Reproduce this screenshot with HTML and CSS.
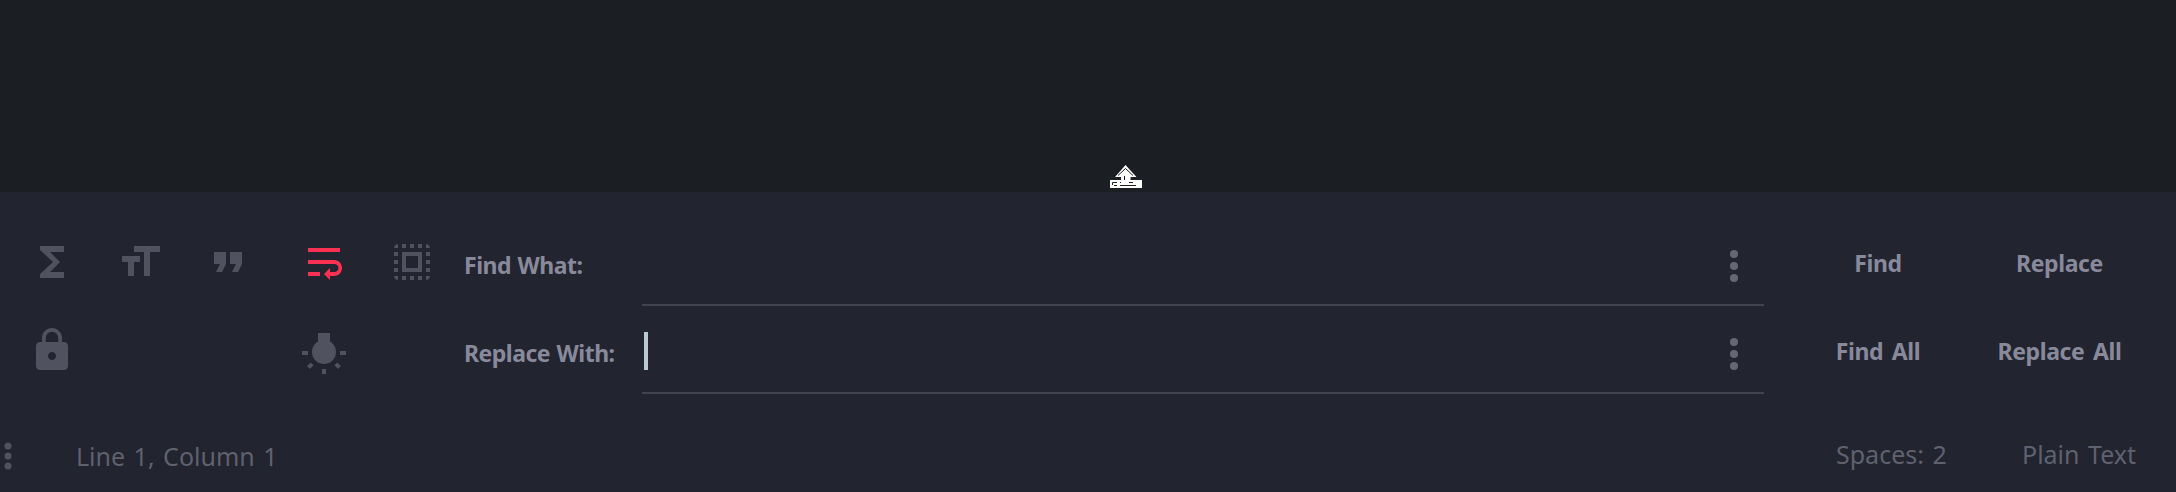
FILE: index.html
```html
<!DOCTYPE html>
<html lang="en">
<head>
<meta charset="utf-8">
<title>Find and Replace</title>
<link rel="stylesheet" href="styles.css">
</head>
<body>
<main class="editor"></main>
<section class="panel">
  <div class="tools">
    <svg class="icon" viewBox="0 0 24 24"><path d="M18 4H6v2l6.500 6L6 18v2h12v-3h-7l5-5-5-5h7z"/></svg>
    <svg class="icon" viewBox="0 0 24 24"><path d="M9 4v3h5v12h3V7h5V4H9zm-6 8h3v7h3v-7h3V9H3v3z"/></svg>
    <svg class="icon" viewBox="0 0 24 24"><path d="M6 17h3l2-4V7H5v6h3zm8 0h3l2-4V7h-6v6h3z"/></svg>
    <svg class="icon active" viewBox="0 0 24 24"><path d="M4 19h6v-2H4v2zM20 5H4v2h16V5zm-3 6H4v2h13.250c1.100 0 2 .9 2 2s-.9 2-2 2H15v-2l-3 3 3 3v-2h2c2.210 0 4-1.790 4-4s-1.790-4-4-4z"/></svg>
    <svg class="icon" viewBox="0 0 24 24"><path d="M3 5h2V3c-1.100 0-2 .9-2 2zm0 8h2v-2H3v2zm4 8h2v-2H7v2zM3 9h2V7H3v2zm10-6h-2v2h2V3zm6 0v2h2c0-1.100-.9-2-2-2zM5 21v-2H3c0 1.100.9 2 2 2zm-2-4h2v-2H3v2zM9 3H7v2h2V3zm2 18h2v-2h-2v2zm8-8h2v-2h-2v2zm0 8c1.100 0 2-.9 2-2h-2v2zm0-12h2V7h-2v2zm0 8h2v-2h-2v2zm-4 4h2v-2h-2v2zm0-16h2V3h-2v2zM7 17h10V7H7v10zm2-8h6v6H9V9z"/></svg>
    <svg class="icon lock" viewBox="0 0 24 24"><path d="M18 8h-1V6c0-2.760-2.240-5-5-5S7 3.240 7 6v2H6c-1.100 0-2 .9-2 2v10c0 1.100.9 2 2 2h12c1.100 0 2-.9 2-2V10c0-1.100-.9-2-2-2zm-6 9c-1.100 0-2-.9-2-2s.9-2 2-2 2 .9 2 2-.9 2-2 2zm3.100-9H8.900V6c0-1.710 1.390-3.100 3.100-3.100s3.100 1.390 3.100 3.100v2z"/></svg>
    <svg class="icon bulb" viewBox="0 0 24 24"><path d="M3.550 18.540l1.410 1.410 1.800-1.790-1.410-1.410-1.800 1.790zM11 22.450h2V20h-2v2.450zM4 11H1v2h3v-2zm11-4.690V2H9v4.310C7.210 7.350 6 9.280 6 11.500c0 3.310 2.690 6 6 6s6-2.690 6-6c0-2.220-1.210-4.150-3-5.190zm5 4.690v2h3v-2h-3zm-2.760 7.160l1.790 1.800 1.410-1.410-1.800-1.790-1.400 1.400z"/></svg>
  </div>
  <div class="fields">
    <label class="field"><span class="label">Find What:</span><span class="input"><svg class="dots" viewBox="0 0 8 32"><circle cx="4" cy="4" r="4"/><circle cx="4" cy="16" r="4"/><circle cx="4" cy="28" r="4"/></svg></span></label>
    <label class="field"><span class="label">Replace With:</span><span class="input"><i class="caret"></i><svg class="dots" viewBox="0 0 8 32"><circle cx="4" cy="4" r="4"/><circle cx="4" cy="16" r="4"/><circle cx="4" cy="28" r="4"/></svg></span></label>
  </div>
  <div class="actions">
    <span class="btn">Find</span><span class="btn">Replace</span>
    <span class="btn">Find All</span><span class="btn">Replace All</span>
  </div>
</section>
<footer class="status">
  <svg class="grip" viewBox="0 0 8 28"><circle cx="4" cy="4" r="3.500"/><circle cx="4" cy="14" r="3.500"/><circle cx="4" cy="24" r="3.500"/></svg>
  <span class="position">Line 1, Column 1</span>
  <span class="spaces">Spaces: 2</span>
  <span class="syntax">Plain Text</span>
</footer>
<svg class="cursor" viewBox="0 0 34 24"><path fill="#fff" d="M16.500 0l11 12h-6v3H33v8H1v-8h11v-3H6z"/><path fill="none" stroke="#1b1e22" d="M9 10.500l7.500-7 7.500 7M15.500 11v4M3.500 20v-2.500H8M5 20.500h3M11 17.500h1M20 17.500h4M11 20.500h16"/></svg>
</body>
</html>
```
FILE: styles.css
```css
* { box-sizing: border-box; }
body {
  margin: 0;
  width: 2176px;
  height: 492px;
  display: flex;
  flex-direction: column;
  overflow: hidden;
  background: #222430;
  font-family: "Noto Sans", sans-serif;
}
.editor { height: 192px; background: #1b1e22; }
.panel { height: 224px; display: flex; padding-top: 26px; }
.tools {
  width: 464px;
  padding-left: 28px;
  display: grid;
  grid-template-columns: 88px 88px 96px 88px 76px;
  grid-template-rows: 88px 88px;
}
.icon { width: 48px; height: 48px; margin-top: 20px; fill: #505260; }
.active { fill: #fc3151; }
.bulb { grid-column: 4; margin-top: 23px; }
.fields { width: 1300px; display: flex; flex-direction: column; }
.field { height: 88px; display: flex; }
.label { width: 178px; padding-top: 32px; font-size: 23px; letter-spacing: -0.5px; word-spacing: 1px; line-height: 30px; font-weight: 700; color: #888a9b; }
.input {
  width: 1122px;
  border-bottom: 2px solid #424450;
  display: flex;
  align-items: flex-start;
  padding-top: 26px;
}
.caret { width: 4px; height: 38px; margin-left: 2px; background: #b8c9cf; }
.dots { width: 8px; height: 32px; margin: 6px 26px 0 auto; fill: #666772; }
.actions {
  display: grid;
  margin-left: 22px;
  grid-template-columns: 184px 179px;
  grid-template-rows: 88px 88px;
}
.btn { padding-top: 30px; text-align: center; font-size: 23px; letter-spacing: -0.4px; word-spacing: 3px; line-height: 30px; font-weight: 700; color: #888a9b; }
.status { height: 76px; display: flex; font-size: 25px; word-spacing: 2px; line-height: 30px; color: #5f616e; padding-top: 25px; }
.grip { width: 8px; height: 28px; margin: 1px 0 0 4px; fill: #505260; }
.position { margin-left: 64px; }
.spaces { margin: -2px 0 0 auto; width: 186px; }
.syntax { margin-top: -2px; width: 154px; }
.cursor { position: absolute; left: 1109px; top: 165px; width: 34px; height: 24px; }
```
